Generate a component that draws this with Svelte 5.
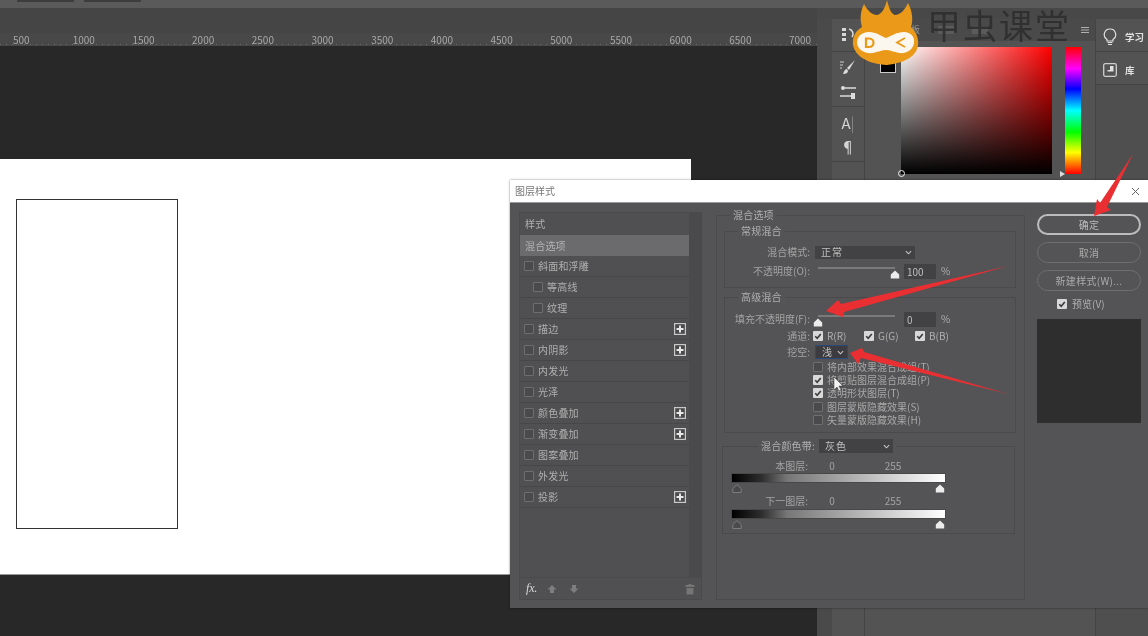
<script>
  const ticks = [500,1000,1500,2000,2500,3000,3500,4000,4500,5000,5500,6000,6500,7000];
  const styles = [
    { t: '斜面和浮雕' },
    { t: '等高线', sub: true },
    { t: '纹理', sub: true },
    { t: '描边', plus: true },
    { t: '内阴影', plus: true },
    { t: '内发光' },
    { t: '光泽' },
    { t: '颜色叠加', plus: true },
    { t: '渐变叠加', plus: true },
    { t: '图案叠加' },
    { t: '外发光' },
    { t: '投影', plus: true }
  ];
  const checks = [
    { t: '将内部效果混合成组(T)', on: false },
    { t: '将剪贴图层混合成组(P)', on: true },
    { t: '透明形状图层(T)', on: true },
    { t: '图层蒙版隐藏效果(S)', on: false },
    { t: '矢量蒙版隐藏效果(H)', on: false }
  ];
  const channels = ['R(R)', 'G(G)', 'B(B)'];
  const bands = ['本图层:', '下一图层:'];
</script>

{#snippet check(on)}
  <span class="cb" class:on>
    {#if on}
      <svg viewBox="0 0 10 10" width="10" height="10"><path d="M2.2 5.2 4.2 7.2 7.8 2.9" fill="none" stroke="#3a3a3a" stroke-width="1.6"/></svg>
    {/if}
  </span>
{/snippet}

{#snippet chevron()}
  <svg class="chev" viewBox="0 0 8 5" width="7" height="5"><path d="M1 1 4 4 7 1" fill="none" stroke="#c8c8c8" stroke-width="1.2"/></svg>
{/snippet}

{#snippet thumb(kind)}
  <svg class="thumb" viewBox="0 0 10 9" width="10" height="9"><path d="M5 .6 9.2 4.6V8.5H.8V4.6Z" fill={kind === 'dark' ? '#4a4a4a' : '#ececec'} stroke={kind === 'dark' ? '#7c7c7c' : 'none'}/></svg>
{/snippet}

<div class="root">
  <div class="workspace">
    <div class="left">
      <div class="optbar">
        <span class="optbox"></span><span class="optbox"></span>
      </div>
      <div class="tabstrip"></div>
      <div class="ruler">
        {#each ticks as n}<span class="tick">{n}</span>{/each}
      </div>
      <div class="canvas">
        <div class="doc"><div class="shape"></div></div>
      </div>
    </div>

    <div class="right">
      <div class="optbar wide"></div>
      <div class="panels">
        <div class="gutter"></div>
        <div class="dock">
          <div class="dsec s1">
            <svg viewBox="0 0 14 16" width="14" height="16"><path d="M1 1h4v3H1zM1 6h4v3H1zM1 11h4v3H1z" fill="#d8d8d8"/><path d="M8 2c4 1 5 5 3 8" fill="none" stroke="#d8d8d8" stroke-width="1.6"/></svg>
          </div>
          <div class="dsec s2">
            <svg viewBox="0 0 18 16" width="18" height="16"><path d="M1 3h4M1 6h3M1 9h2" stroke="#cfcfcf" stroke-width="1"/><path d="M16 1 8 9 10 11Z" fill="#dcdcdc"/><path d="M8 10c-2 0-3 2-4 5 3 0 5-1 5-3Z" fill="#dcdcdc"/></svg>
            <svg viewBox="0 0 18 16" width="18" height="16"><circle cx="4" cy="3" r="2" fill="#dcdcdc"/><path d="M6 3h11M1 11h11" stroke="#dcdcdc" stroke-width="1.5"/><path d="M12 8h4v6h-4z" fill="#dcdcdc"/></svg>
          </div>
          <div class="dsec s3">
            <span class="glyph a">A<i>|</i></span>
            <span class="glyph">¶</span>
          </div>
          <div class="dsec s4"></div>
        </div>

        <div class="colorpanel">
          <div class="ctabs">
            <span class="ctab first">板</span>
            <span class="blob"></span>
            <span class="blob"></span>
            <svg class="ham" viewBox="0 0 8 6" width="8" height="6"><path d="M0 .5h8M0 3h8M0 5.5h8" stroke="#b0b0b0"/></svg>
          </div>
          <div class="cbody">
            <div class="swatchcol"><span class="fg"></span></div>
            <div class="picker"><span class="ring"></span></div>
            <div class="huewrap"><span class="hueptr"></span><div class="hue"></div></div>
          </div>
        </div>

        <div class="learn">
          <div class="lrow">
            <svg viewBox="0 0 14 18" width="14" height="18"><path d="M7 1a5.6 5.6 0 0 0-3 10.4V13h6v-1.6A5.6 5.6 0 0 0 7 1Z" fill="none" stroke="#e0e0e0" stroke-width="1.2"/><path d="M4.5 14.5h5M5 16.5h4" stroke="#e0e0e0" stroke-width="1.2"/></svg>
            <span>学习</span>
          </div>
          <div class="lrow">
            <svg viewBox="0 0 14 14" width="14" height="14"><rect x=".7" y=".7" width="12.6" height="12.6" rx="1.5" fill="none" stroke="#cfcfcf" stroke-width="1.3"/><path d="M7 3h3.5v5.5H4.5V7H7Z" fill="#e0e0e0"/></svg>
            <span>库</span>
          </div>
        </div>
      </div>
    </div>
  </div>

  <section class="dialog">
    <header class="title"><span>图层样式</span>
      <svg viewBox="0 0 9 9" width="9" height="9"><path d="M1 1 8 8M8 1 1 8" stroke="#666" stroke-width="1"/></svg>
    </header>
    <div class="dbody">
      <aside class="listpanel">
        <div class="listmain">
          <ul class="list">
            <li class="row head">样式</li>
            <li class="row active">混合选项</li>
            {#each styles as s}
              <li class="row" class:sub={s.sub}>
                {@render check(false)}
                <span class="rt">{s.t}</span>
                {#if s.plus}
                  <svg class="plus" viewBox="0 0 12 12" width="12" height="12"><rect x=".6" y=".6" width="10.8" height="10.8" fill="#4a4a4a" stroke="#c8c8c8" stroke-width="1.2"/><path d="M6 2.5v7M2.5 6h7" stroke="#e8e8e8" stroke-width="2"/></svg>
                {/if}
              </li>
            {/each}
          </ul>
          <div class="scroll"></div>
        </div>
        <footer class="lfoot">
          <span class="fx">fx<b>.</b></span>
          <svg viewBox="0 0 10 10" width="10" height="10"><path d="M5 1 9.5 5.5H7V9H3V5.5H.5Z" fill="#7d7d7d"/></svg>
          <svg viewBox="0 0 10 10" width="10" height="10"><path d="M5 9 9.5 4.5H7V1H3V4.500H.5Z" fill="#7d7d7d"/></svg>
          <svg class="trash" viewBox="0 0 10 12" width="10" height="12"><path d="M3.5 1h3v1H9.5v2H.5V2h3ZM1.5 5h7v6.500h-7Z" fill="#757575"/></svg>
        </footer>
      </aside>

      <fieldset class="fs outer">
        <legend>混合选项</legend>
        <fieldset class="fs g1">
          <legend>常规混合</legend>
          <div class="frow r1">
            <span class="lab">混合模式:</span>
            <div class="picksel s-mode"><span>正常</span>{@render chevron()}</div>
          </div>
          <div class="frow r2">
            <span class="lab">不透明度(O):</span>
            <div class="slider"><div class="track"></div><div class="thumbwrap end">{@render thumb('light')}</div></div>
            <span class="inp">100</span><span class="pct">%</span>
          </div>
        </fieldset>

        <fieldset class="fs g2">
          <legend>高级混合</legend>
          <div class="frow r3">
            <span class="lab">填充不透明度(F):</span>
            <div class="slider"><div class="track"></div><div class="thumbwrap">{@render thumb('light')}</div></div>
            <span class="inp">0</span><span class="pct">%</span>
          </div>
          <div class="frow chrow">
            <span class="lab">通道:</span>
            <div class="channels">
              {#each channels as c}
                <span class="ch">{@render check(true)}<span>{c}</span></span>
              {/each}
            </div>
          </div>
          <div class="frow kn">
            <span class="lab">挖空:</span>
            <div class="picksel s-knock"><span>浅</span>{@render chevron()}</div>
          </div>
          <ul class="checks">
            {#each checks as c}
              <li>{@render check(c.on)}<span>{c.t}</span></li>
            {/each}
          </ul>
        </fieldset>

        <fieldset class="fs g3">
          <legend class="blendlegend">
            <span>混合颜色带:</span>
            <div class="picksel s-band"><span>灰色</span>{@render chevron()}</div>
          </legend>
          {#each bands as b, i}
            <div class="band" class:second={i === 1}>
              <div class="bandlabels"><span class="bl">{b}</span><span>0</span><span>255</span></div>
              <div class="bar"></div>
              <div class="marks">{@render thumb('dark')}{@render thumb('light')}</div>
            </div>
          {/each}
        </fieldset>
      </fieldset>

      <aside class="actions">
        <button class="btn primary">确定</button>
        <button class="btn">取消</button>
        <button class="btn">新建样式(W)...</button>
        <div class="preview">{@render check(true)}<span>预览(V)</span></div>
        <div class="thumbnail"></div>
      </aside>
    </div>
  </section>

  <svg class="overlay" viewBox="0 0 1148 636" width="1148" height="636" aria-hidden="true">
    <g fill="#ea2f33">
      <path d="M826 311 838 300 841 304 1008 266 844 312 843 317Z"/>
      <path d="M850 353 862 348 864 352 1008 394 861 358 858 364Z"/>
      <path d="M1094 216 1097 199 1100 203 1133 154 1107 207 1111 210Z"/>
    </g>
    <path d="M834 377V390L837 387 839 391 841 390 839 386H843Z" fill="#f2f2f2" stroke="#333" stroke-width=".5"/>
    <path d="M887 0C889 8 891 14 895 15 900 15 905 10 908 3 913 12 913 22 911 27 916 32 919 38 918 45 917 56 905 63 887 65 868 64 855 56 853 45 852 38 855 31 862 27 860 20 860 12 864 4 868 11 872 15 877 15 882 14 885 8 887 0Z" fill="#ea9a18"/>
    <path d="M869 32C876 32 881 36 886 38 891 36 897 32 904 32 911 32 915 37 914 43 913 50 906 54 899 53 894 52 890 50 886 50 882 50 878 52 873 53 865 54 858 50 857 43 857 37 861 32 869 32Z" fill="#fbf7ee"/>
    <path d="M866 38.5H869C875 38.500 875 47 869 47H866Z" fill="none" stroke="#ea9a18" stroke-width="2.2"/>
    <path d="M905 38 897 42.5 905 47" fill="none" stroke="#ea9a18" stroke-width="1.8"/>
  </svg>
  <div class="brand">甲虫课堂</div>
</div>

<style>
  :global(body) { margin: 0; background: #282829; }
  * { box-sizing: border-box; }
  .root {
    position: relative; width: 1148px; height: 636px; overflow: hidden;
    font: 10px/14px "Noto Sans CJK SC", "Liberation Sans", sans-serif;
    color: #b0b0b0; filter: blur(.5px);
  }
  .workspace { display: flex; height: 100%; }
  .left { width: 817px; display: flex; flex-direction: column; }
  .right { flex: 1; display: flex; flex-direction: column; background: #484848; }
  .optbar { height: 8px; background: #5a5a5a; display: flex; gap: 10px; padding-left: 17px; flex: none; }
  .optbox { width: 57px; height: 2px; background: #3d3d3d; }
  .tabstrip { height: 25px; background: #454545; flex: none; }
  .ruler {
    height: 13px; flex: none; display: flex; padding-left: 13px; color: #a8a8a8; line-height: 13px;
    background: repeating-linear-gradient(90deg, #6e6e6e 0 1px, transparent 1px 6px) 0 11px / 100% 1px no-repeat #484848;
    font-size: 10px;
  }
  .tick { width: 59.7px; flex: none; }
  .canvas { flex: 1; background: #282829; padding-top: 113px; }
  .doc { width: 691px; height: 416px; background: #fff; padding: 40px 0 0 16px; border-bottom: 1px solid #999; margin-right: 126px; }
  .shape { width: 162px; height: 330px; border: 1px solid #333; }

  .panels { flex: 1; display: flex; padding-top: 11px; min-height: 0; }
  .gutter { width: 15px; flex: none; background: #4a4a4a; }
  .dock { width: 32px; flex: none; display: flex; flex-direction: column; background: #535353; }
  .dsec { display: flex; flex-direction: column; align-items: center; border-bottom: 1px solid #444; }
  .s1 { height: 33px; justify-content: center; }
  .s2 { height: 55px; gap: 10px; justify-content: center; padding-top: 2px; }
  .s3 { height: 55px; justify-content: center; gap: 4px; padding-top: 2px; }
  .s4 { flex: 1; border-bottom: 0; }
  .glyph { font-size: 15px; line-height: 20px; color: #d4d4d4; }
  .glyph i { font-style: normal; font-weight: 300; color: #999; }
  .colorpanel { width: 232px; flex: none; background: #535353; border-left: 1px solid #444; border-right: 1px solid #444; display: flex; flex-direction: column; }
  .ctabs { height: 22px; background: #4a4a4a; display: flex; align-items: center; gap: 18px; padding: 0 6px 0 46px; color: #9a9a9a; font-size: 9px; }
  .blob { width: 16px; height: 8px; background: #6a6a6a; opacity: .55; }
  .ham { margin-left: auto; }
  .cbody { display: flex; padding: 6px 0 0 15px; flex: 1; }
  .swatchcol { width: 21px; padding-top: 12px; }
  .fg { display: block; width: 16px; height: 14px; background: #000; border: 1px solid #ccc; }
  .picker {
    position: relative; width: 151px; height: 127px;
    background: linear-gradient(to top, #000, rgba(0,0,0,0)), linear-gradient(to right, #fff, #f00);
  }
  .ring { position: absolute; left: -3px; bottom: -3px; width: 7px; height: 7px; border-radius: 50%; border: 1px solid #eee; }
  .huewrap { position: relative; margin-left: 13px; }
  .hue { width: 16px; height: 127px; background: linear-gradient(to bottom, #f00 0%, #f0f 17%, #00f 33%, #0ff 50%, #0f0 67%, #ff0 83%, #f00 100%); }
  .hueptr { position: absolute; left: -5px; top: 124px; border-left: 5px solid #ddd; border-top: 3px solid transparent; border-bottom: 3px solid transparent; }
  .learn { flex: 1; display: flex; flex-direction: column; background: #4f4f4f; }
  .lrow { height: 33px; display: flex; align-items: center; gap: 8px; padding: 3px 0 0 7px; background: #535353; border-bottom: 1px solid #444; color: #e0e0e0; font-weight: 700; font-size: 9.5px; }

  .dialog {
    position: absolute; left: 510px; top: 180px; width: 638px; height: 428px;
    background: #545355; display: flex; flex-direction: column;
    box-shadow: 0 0 2px rgba(0,0,0,.5);
  }
  .title { height: 23px; flex: none; background: #fff; color: #777; display: flex; justify-content: space-between; align-items: center; padding: 0 8px 0 5px; border-bottom: 1px solid #999; }
  .dbody { display: grid; grid-template-columns: 183px 309px 104px; column-gap: 14px; flex: 1; padding: 5px 7px 8px 9px; align-items: start; }
  .dbody > .actions { margin-left: -2px; margin-top: 6px; }

  .listpanel { margin-top: 4px; height: 388px; display: flex; flex-direction: column; background: #504f51; border: 1px solid #4a494b; }
  .listmain { flex: 1; display: flex; min-height: 0; }
  .list { list-style: none; margin: 0; padding: 1px 0 0; width: 169px; flex: none; }
  .scroll { flex: 1; background: #4a494b; }
  .row { height: 21px; display: flex; align-items: center; padding: 0 3px 0 4px; color: #b0b0b0; border-bottom: 1px solid #474648; letter-spacing: .2px; }
  .head { border: 0; padding-left: 5px; padding-bottom: 2px; }
  .row.active { background: #6b6a6c; border: 0; color: #b4b4b4; padding-left: 5px; }
  .row.sub { padding-left: 13px; }
  .rt { margin-left: 4px; }
  .plus { margin-left: auto; }
  .lfoot { height: 22px; flex: none; display: flex; align-items: center; gap: 12px; padding: 0 6px; border-top: 1px solid #4a494b; }
  .fx { font: italic 12px "Liberation Serif", serif; color: #d8d8d8; width: 14px; margin-right: -5px; }
  .fx b { font-size: 9px; }
  .trash { margin-left: auto; }

  .fs { margin: 0; padding: 0; border: 1px solid #4a494b; min-width: 0; }
  .fs > legend { padding: 0 3px; margin-left: 13px; line-height: 14px; height: 14px; color: #b0b0b0; letter-spacing: .2px; }
  .outer { height: 392px; padding: 2px 8px 0 7px; }
  .outer > legend { margin-left: 6px; }
  .g1 { height: 64px; padding-top: 6px; }
  .g2 { height: 143px; margin-top: 2px; padding-top: 7px; }
  .g3 { height: 95px; margin: 6px 1px 0 -2px; padding: 6px 0 0 8px; }
  .frow { display: flex; align-items: center; height: 16px; position: relative; }
  .lab { width: 85px; flex: none; text-align: right; color: #a4a4a4; white-space: nowrap; }
  .r2 { margin-top: 3px; }
  .chrow, .kn { margin-top: 1px; }
  .chrow { height: 15px; }
  .picksel { background: #424143; display: flex; align-items: center; justify-content: space-between; height: 13px; padding: 0 3px 0 6px; color: #c0c0c0; letter-spacing: 1px; }
  .s-mode { width: 100px; margin-left: 5px; }
  .s-knock { width: 33px; height: 14px; margin-left: 5px; border: 1px solid #2b4a7a; background: #3b3b40; }
  .s-band { width: 74px; height: 14px; }
  .slider { width: 77px; margin-left: 8px; height: 16px; position: relative; flex: none; }
  .track { position: absolute; left: 0; right: 0; top: 4px; height: 2px; background: #7a7a7a; }
  .thumbwrap { position: absolute; left: -5px; top: 7px; line-height: 0; }
  .thumbwrap.end { left: auto; right: -5px; }
  .inp { width: 32px; height: 15px; margin-left: 9px; background: #424143; color: #c0c0c0; padding-left: 3px; line-height: 15px; flex: none; }
  .pct { margin-left: 5px; }
  .channels { display: flex; margin-left: 3px; }
  .ch { display: flex; align-items: center; gap: 4px; width: 51px; }
  .cb { width: 10px; height: 10px; flex: none; display: block; background: #4a494b; border: 1px solid #6e6e6e; border-radius: 1px; line-height: 0; }
  .cb.on { background: #d8d8d8; border: 0; }
  .checks { list-style: none; margin: 0; padding: 0 0 0 88px; }
  .checks li { height: 13.3px; display: flex; align-items: center; gap: 4px; white-space: nowrap; color: #a8a8a8; }
  .blendlegend { display: flex; align-items: center; gap: 4px; margin-left: 27px !important; }
  .bandlabels { display: grid; grid-template-columns: 77px 48px 74px; height: 14px; text-align: center; color: #a4a4a4; }
  .bl { text-align: right; }
  .band.second .bar { margin-top: 1px; }
  .bar { width: 215px; height: 10px; background: linear-gradient(to right, #000 0%, #2e2e2e 14%, #777 26%, #fff 100%); border: 1px solid #484848; }
  .marks { width: 215px; height: 11px; display: flex; justify-content: space-between; padding: 1px 1px 0; line-height: 0; }

  .actions { display: flex; flex-direction: column; gap: 7px; }
  .btn { width: 104px; height: 21px; border-radius: 11px; background: transparent; border: 1.5px solid #6e6e70; color: #aaa; font: inherit; padding: 0; letter-spacing: .3px; }
  .btn.primary { border: 2px solid #bcbcbc; color: #bbb; }
  .preview { display: flex; align-items: center; gap: 5px; padding-left: 20px; height: 14px; margin-top: -1px; color: #b0b0b0; }
  .thumbnail { width: 104px; height: 104px; margin-top: 1px; background: #2e2e2f; }

  .overlay { position: absolute; left: 0; top: 0; pointer-events: none; }
  .brand { position: absolute; left: 927px; top: 0; font-size: 34px; line-height: 50px; letter-spacing: 2px; color: #2c2c2c; opacity: .85; }
</style>
